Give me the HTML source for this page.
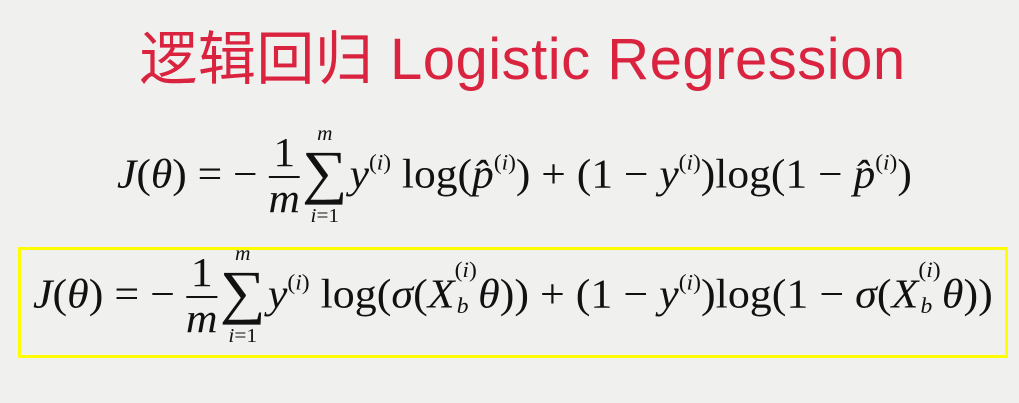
<!DOCTYPE html>
<html><head><meta charset="utf-8"><style>
html,body{margin:0;padding:0;background:#f0f0ef;width:1019px;height:403px;overflow:hidden;position:relative}
.title{position:absolute;left:13px;width:1019px;top:12px;text-align:center;color:#d9233f;font:58px "Liberation Sans","Noto Sans CJK SC",sans-serif;white-space:nowrap;letter-spacing:0.5px}
.f{position:absolute;font-family:"Liberation Serif",serif;font-size:41px;color:#111;white-space:nowrap;line-height:1}
.f i{font-style:italic}
.ib{display:inline-block;vertical-align:middle;text-align:center;position:relative}
.frac .n{display:block;border-bottom:2px solid #111;padding:0 3px;line-height:48px;margin-top:-10px}
.frac .d{display:block;line-height:40px}
.sum{font-size:60px;margin:0 2px;top:-6px}
.sum .u{position:absolute;top:-18px;left:0;right:0;font-size:20px;font-style:italic}
.sum .l{position:absolute;bottom:-24px;left:0;right:0;font-size:20px}
sup{font-size:22px;vertical-align:18px}
.sb{display:inline-block;position:relative;width:22px;height:10px}
.sb sup{position:absolute;left:0;top:-38px}
.sb .b{position:absolute;left:2px;top:-2px;font-size:22px;font-style:italic}
.box{position:absolute;left:18px;top:247px;width:984px;height:105px;border:3px solid #ffff00}
</style></head><body>
<div class="title">逻辑回归 Logistic Regression</div>
<div class="f" style="left:117px;top:138px;transform-origin:0 0;transform:scaleX(1.062)">
<i>J</i>(<i>θ</i>) = − <span class="ib frac"><span class="n">1</span><span class="d"><i>m</i></span></span><span class="ib sum">∑<span class="u">m</span><span class="l"><i>i</i>=1</span></span><i>y</i><sup>(<i>i</i>)</sup> log(<i>p̂</i><sup>(<i>i</i>)</sup>) + (1 − <i>y</i><sup>(<i>i</i>)</sup>)log(1 − <i>p̂</i><sup>(<i>i</i>)</sup>)
</div>
<div class="box"></div>
<div class="f" style="left:33px;top:258px;transform-origin:0 0;transform:scaleX(1.072)">
<i>J</i>(<i>θ</i>) = − <span class="ib frac"><span class="n">1</span><span class="d"><i>m</i></span></span><span class="ib sum">∑<span class="u">m</span><span class="l"><i>i</i>=1</span></span><i>y</i><sup>(<i>i</i>)</sup> log(<i>σ</i>(<i>X</i><span class="sb"><sup>(<i>i</i>)</sup><span class="b">b</span></span><i>θ</i>)) + (1 − <i>y</i><sup>(<i>i</i>)</sup>)log(1 − <i>σ</i>(<i>X</i><span class="sb"><sup>(<i>i</i>)</sup><span class="b">b</span></span><i>θ</i>))
</div>
</body></html>
